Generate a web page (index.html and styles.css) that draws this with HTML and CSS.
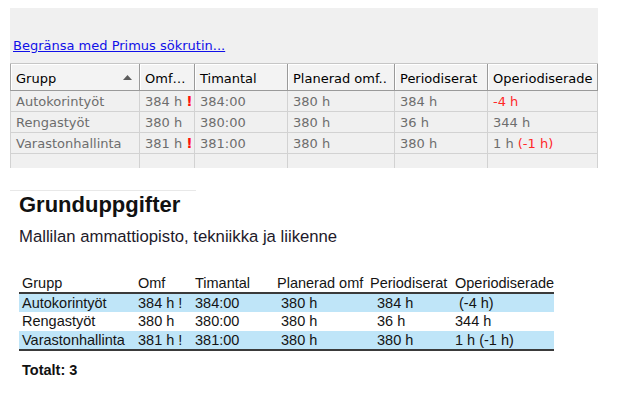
FILE: index.html
```html
<!DOCTYPE html>
<html lang="sv">
<head>
<meta charset="utf-8">
<title>Grunduppgifter</title>
<link rel="stylesheet" href="styles.css">
</head>
<body>
<div class="panel">
  <a class="link" href="#">Begränsa med Primus sökrutin...</a>
  <div class="grid">
    <div class="hrow">
      <div class="hcell first"><span>Grupp</span><svg class="sort" width="9" height="5" viewBox="0 0 9 5"><polygon points="0,5 9,5 4.5,0" fill="#5c5c5c"/></svg></div>
      <div class="hcell">Omf…</div>
      <div class="hcell">Timantal</div>
      <div class="hcell">Planerad omf..</div>
      <div class="hcell">Periodiserat</div>
      <div class="hcell">Operiodiserade</div>
    </div>
    <div class="brow">
      <div class="bcell first">Autokorintyöt</div>
      <div class="bcell">384 h<b class="warn">!</b></div>
      <div class="bcell">384:00</div>
      <div class="bcell">380 h</div>
      <div class="bcell">384 h</div>
      <div class="bcell"><span class="neg">-4 h</span></div>
    </div>
    <div class="brow">
      <div class="bcell first">Rengastyöt</div>
      <div class="bcell">380 h</div>
      <div class="bcell">380:00</div>
      <div class="bcell">380 h</div>
      <div class="bcell">36 h</div>
      <div class="bcell">344 h</div>
    </div>
    <div class="brow">
      <div class="bcell first">Varastonhallinta</div>
      <div class="bcell">381 h<b class="warn">!</b></div>
      <div class="bcell">381:00</div>
      <div class="bcell">380 h</div>
      <div class="bcell">380 h</div>
      <div class="bcell">1 h <span class="neg">(-1 h)</span></div>
    </div>
    <div class="brow">
      <div class="bcell first"></div>
      <div class="bcell"></div>
      <div class="bcell"></div>
      <div class="bcell"></div>
      <div class="bcell"></div>
      <div class="bcell"></div>
    </div>
  </div>
</div>

<div class="report">
  <div class="rule"></div>
  <h1 class="title">Grunduppgifter</h1>
  <p class="subtitle">Mallilan ammattiopisto, tekniikka ja liikenne</p>
  <div class="rtable">
    <div class="rhead">
      <div class="rc">Grupp</div>
      <div class="rc">Omf</div>
      <div class="rc">Timantal</div>
      <div class="rc">Planerad omf</div>
      <div class="rc">Periodiserat</div>
      <div class="rc">Operiodiserade</div>
    </div>
    <div class="rrow blue h18">
      <div class="rc">Autokorintyöt</div>
      <div class="rc">384 h !</div>
      <div class="rc">384:00</div>
      <div class="rc ind1">380 h</div>
      <div class="rc ind2">384 h</div>
      <div class="rc ind3">(-4 h)</div>
    </div>
    <div class="rrow h19">
      <div class="rc">Rengastyöt</div>
      <div class="rc">380 h</div>
      <div class="rc">380:00</div>
      <div class="rc ind1">380 h</div>
      <div class="rc ind2">36 h</div>
      <div class="rc">344 h</div>
    </div>
    <div class="rrow blue h18 last">
      <div class="rc">Varastonhallinta</div>
      <div class="rc">381 h !</div>
      <div class="rc">381:00</div>
      <div class="rc ind1">380 h</div>
      <div class="rc ind2">380 h</div>
      <div class="rc">1 h (-1 h)</div>
    </div>
  </div>
  <div class="total">Totalt: 3</div>
</div>
</body>
</html>
```

FILE: styles.css
```css
html, body {
  margin: 0;
  padding: 0;
  background: #ffffff;
}

body {
  font-family: "Liberation Sans", Arial, sans-serif;
}

/* ---------- top grid panel ---------- */
.panel {
  margin: 8px 0 0 10px;
  width: 588px;
  height: 160px;
  box-sizing: border-box;
  padding-top: 30px;
  background: #f0f0f0;
  overflow: hidden;
  font-family: "DejaVu Sans", sans-serif;
  font-size: 13px;
}

.link {
  display: block;
  margin-left: 3px;
  width: max-content;
  line-height: 16px;
  color: #1010e8;
  text-decoration: underline;
}

.grid {
  margin-top: 9px;
}

.hrow,
.brow {
  display: grid;
  grid-template-columns: 130px 55px 93px 107px 93px 110px;
}

.hrow {
  border-top: 1px solid #c6c6c6;
}

.hcell {
  box-sizing: border-box;
  height: 27px;
  padding: 2px 0 0 5px;
  display: flex;
  align-items: center;
  justify-content: space-between;
  color: #000;
  background: #f3f3f3;
  border-right: 1px solid #9a9a9a;
  border-bottom: 1px solid #9a9a9a;
  box-shadow: inset 1px 1px 0 #ffffff;
  white-space: nowrap;
  overflow: hidden;
}

.hcell.first {
  border-left: 1px solid #a8a8a8;
}

.sort {
  margin: 0 7px 2px 0;
  flex: none;
}

.bcell {
  box-sizing: border-box;
  height: 21px;
  padding: 1px 0 0 5px;
  line-height: 19px;
  color: #6d6d6d;
  border-right: 1px solid #d2d2d2;
  border-bottom: 1px solid #d2d2d2;
  white-space: nowrap;
  overflow: hidden;
}

.bcell.first {
  border-left: 1px solid #d2d2d2;
}

.warn {
  color: #ff1010;
  margin-left: 4px;
  font-size: 14px;
}

.neg {
  color: #ff2828;
}

/* ---------- report section ---------- */
.report {
  margin-top: 22px;
}

.rule {
  margin-left: 10px;
  width: 186px;
  border-top: 1px solid #e8e8e8;
}

.title {
  margin: 1px 0 0 19px;
  font-size: 22px;
  line-height: 25px;
  font-weight: bold;
  color: #111;
}

.subtitle {
  margin: 10px 0 0 19px;
  font-size: 16.7px;
  line-height: 19px;
  color: #1e1a2a;
}

.rtable {
  margin: 29px 0 0 19px;
  width: 535px;
  font-size: 14.5px;
  color: #141414;
}

.rhead,
.rrow {
  display: grid;
  grid-template-columns: 116px 57px 82px 93px 85px 102px;
}

.rhead {
  height: 17px;
  line-height: 17px;
  border-bottom: 2px solid #3a3a3a;
}

.rrow.h18 {
  height: 18px;
  line-height: 18px;
}

.rrow.h19 {
  height: 19px;
  line-height: 19px;
}

.rrow.blue {
  background: #bfe5f8;
}

.rrow.last {
  border-bottom: 2px solid #3a3a3a;
}

.rc {
  padding-left: 3px;
  white-space: nowrap;
}

.rc.ind1 {
  padding-left: 7px;
}

.rc.ind2 {
  padding-left: 10px;
}

.rc.ind3 {
  padding-left: 7px;
}

.total {
  margin: 11px 0 0 22px;
  font-size: 14.5px;
  line-height: 17px;
  font-weight: bold;
  color: #111;
}
```
